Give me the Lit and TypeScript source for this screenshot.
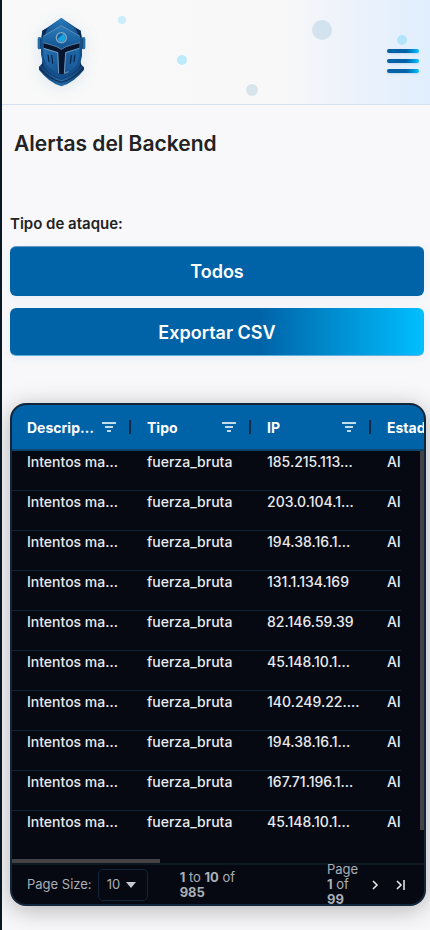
import { LitElement, html, css, svg } from "lit";
import { customElement, property, state } from "lit/decorators.js";

interface Alerta {
  descripcion: string;
  tipo: string;
  ip: string;
  estado: string;
}

const IPS = [
  "185.215.113…",
  "203.0.104.1…",
  "194.38.16.1…",
  "131.1.134.169",
  "82.146.59.39",
  "45.148.10.1…",
  "140.249.22.…",
  "194.38.16.1…",
  "167.71.196.1…",
  "45.148.10.1…",
];

const helmet = svg`
  <defs>
    <linearGradient id="dome" x1="0" y1="0" x2="0" y2="1">
      <stop offset="0" stop-color="#2a7dbd" />
      <stop offset="1" stop-color="#12528f" />
    </linearGradient>
    <linearGradient id="plate" x1="0" y1="0" x2="1" y2="1">
      <stop offset="0" stop-color="#2874b5" />
      <stop offset="1" stop-color="#15528f" />
    </linearGradient>
    <linearGradient id="plateR" x1="1" y1="0" x2="0" y2="1">
      <stop offset="0" stop-color="#1d68aa" />
      <stop offset="1" stop-color="#185593" />
    </linearGradient>
    <linearGradient id="collar" x1="0" y1="0" x2="1" y2="0">
      <stop offset="0" stop-color="#0f3a6c" />
      <stop offset="0.5" stop-color="#2469a6" />
      <stop offset="1" stop-color="#0f3a6c" />
    </linearGradient>
  </defs>
  <path d="M117 202 L129 190 L238 190 L252 204 L252 211 Q224 248 184 261 Q145 248 117 211Z" fill="url(#collar)" />
  <path d="M120 207 Q147 239 184 249 Q222 239 249 207" fill="none" stroke="#0a2348" stroke-width="3" />
  <path d="M125 198 Q150 231 184 241 Q219 231 244 198 L240 180 H128Z" fill="#0b2a54" />
  <path d="M127 94 L140 86 L184 56 L229 86 L242 94 L246 120 L246 170 L238 204 Q214 230 184 240 Q154 230 131 204 L123 165 L123 120Z" fill="#154f8b" />
  <path d="M127 94 L142 86 L132 112 L125 116Z M242 94 L227 86 L238 112 L245 116Z" fill="#0a2a52" />
  <path d="M184 56 L219 83 L237 111 L184 79 L132 111 L149 83Z" fill="url(#dome)" />
  <path d="M184 80 L240 112 L241 129 L217 135 Q194 141 184 149 Q174 141 151 135 L127 129 L128 112Z" fill="url(#dome)" />
  <path d="M129 111 L184 79 L240 111" fill="none" stroke="#86a6c0" stroke-width="2" />
  <path d="M131 131 L151 137 Q172 142 184 151 Q196 142 217 137 L238 131 L237 146 L196 158 L192 224 L178 224 L175 158 L132 146Z" fill="#07152f" />
  <path d="M129 130 L151 136 Q172 141 184 150 Q196 141 217 136 L240 130" fill="none" stroke="#7e99b0" stroke-width="2" />
  <path d="M130 146 L173 159 L177 222 Q153 212 140 196 L131 172Z" fill="url(#plate)" />
  <path d="M131 147 L173 160 L176 222" fill="none" stroke="#9fb5c7" stroke-width="2" />
  <path d="M239 146 L197 159 L192 222 Q217 212 230 196 L238 172Z" fill="url(#plateR)" />
  <path d="M238 147 L197 160 L193 222 L206 217" fill="none" stroke="#9fb5c7" stroke-width="2" />
  <path d="M144 167 L147 187 M155 168 L158 192 M225 167 L222 187 M214 168 L211 192" stroke="#06193a" stroke-width="3" stroke-linecap="round" />
  <rect x="113" y="113" width="11" height="37" rx="5" fill="#236da9" />
  <rect x="245" y="113" width="11" height="37" rx="5" fill="#236da9" />
  <path d="M122 117 V147 M247 117 V147" stroke="#0a2a52" stroke-width="2" />
  <circle cx="184" cy="115" r="15" fill="#0b5fa8" stroke="#8fa9c0" stroke-width="4" />
  <path d="M173 119 L190 103 Q197 108 196 116 Q194 127 184 127 Q176 127 173 119Z" fill="#1fb4ec" opacity="0.8" />
`;

@customElement("site-header")
export class SiteHeader extends LitElement {
  static styles = css`
    :host {
      display: block;
    }
    .bar {
      position: relative;
      display: flex;
      align-items: center;
      justify-content: space-between;
      height: 104px;
      padding: 0 11px 0 33px;
      border-bottom: 1px solid #d5e1f1;
      background: linear-gradient(90deg, #f9f9f9 0%, #f8f8f8 65%, #ecf2fb 83%, #e0eefd 100%);
    }
    .logo {
      display: block;
      filter: drop-shadow(0 2px 8px rgba(0, 98, 167, 0.12));
    }
    .dot {
      position: absolute;
      border-radius: 50%;
    }
    .d1 { left: 116px; top: 16px; width: 8px; height: 8px; background: #caeefa; }
    .d2 { left: 175px; top: 55px; width: 10px; height: 10px; background: #bdebfa; }
    .d3 { right: 98px; top: 20px; width: 20px; height: 20px; background: #d2e2ee; }
    .d4 { right: 172px; top: 84px; width: 12px; height: 12px; background: #d8e4eb; }
    .d5 { right: 23px; top: 35px; width: 10px; height: 10px; background: #b2e5fc; }
    .menu {
      position: relative;
      display: flex;
      flex-direction: column;
      gap: 6px;
      margin-top: 18px;
      padding: 0;
      border: 0;
      background: none;
    }
    .line {
      width: 32px;
      height: 4px;
      border-radius: 2px;
      background: linear-gradient(90deg, #0062a7 60%, #00bfff);
      box-shadow: 0 1px 2px rgba(0, 98, 167, 0.15);
    }
  `;

  render() {
    return html`
      <header class="bar">
        <span class="dot d1"></span><span class="dot d2"></span>
        <span class="dot d3"></span><span class="dot d4"></span>
        <span class="dot d5"></span>
        <svg class="logo" width="53" height="70" viewBox="105 53 159 210" role="img" aria-label="Logo">
          ${helmet}
        </svg>
        <button class="menu" aria-label="Menú">
          <span class="line"></span><span class="line"></span><span class="line"></span>
        </button>
      </header>
    `;
  }
}

@customElement("alert-grid")
export class AlertGrid extends LitElement {
  @property({ type: Array }) rows: Alerta[] = [];

  static styles = css`
    :host {
      display: block;
      overflow: hidden;
      border: 2px solid #13273c;
      border-radius: 16px;
      background: #060911;
      color: #e9ebef;
      font-size: 14px;
      box-shadow: 0 4px 24px rgba(0, 0, 0, 0.28);
    }
    .viewport {
      position: relative;
    }
    table,
    thead,
    tbody {
      display: block;
    }
    thead {
      overflow: hidden;
      border-bottom: 2px solid #0b4673;
      background: #0062a7;
    }
    tbody {
      overflow: hidden;
      margin-right: 23px;
      padding-bottom: 8px;
      font-weight: 500;
    }
    tr {
      display: grid;
      grid-template-columns: repeat(4, 120px);
    }
    th {
      display: flex;
      align-items: center;
      height: 44px;
      padding: 0 1px 0 15px;
      color: #fff;
      font-weight: 700;
      text-align: left;
    }
    .name {
      flex: 1;
      min-width: 0;
      overflow: hidden;
      text-overflow: ellipsis;
      white-space: nowrap;
    }
    .filter {
      display: flex;
      margin: 0 13px 0 5px;
      padding: 0;
      border: 0;
      background: none;
    }
    .divider {
      width: 2px;
      height: 14px;
      background: #0b2c49;
    }
    td {
      height: 39px;
      padding: 0 0 0 15px;
      border-bottom: 1px solid #132234;
      line-height: 22px;
      white-space: nowrap;
    }
    tr:last-child td {
      border-color: transparent;
    }
    .vbar {
      position: absolute;
      top: 46px;
      right: 0;
      width: 4px;
      height: 379px;
      background: #434345;
    }
    .hbar {
      width: 36%;
      height: 4px;
      background: #434345;
    }
    .pager {
      display: flex;
      align-items: center;
      height: 39px;
      padding: 0 15px;
      border-top: 2px solid #0d1821;
      color: #abb0b8;
      font-size: 13px;
      line-height: 15px;
    }
    .size {
      width: 50px;
      height: 32px;
      margin-left: 6px;
      padding: 0 8px;
      border: 1px solid #13273c;
      border-radius: 5px;
      appearance: none;
      background: none;
      color: inherit;
      font: inherit;
    }
    .pick {
      position: relative;
      display: flex;
    }
    .caret {
      position: absolute;
      top: 13px;
      right: 12px;
      border: 5px solid transparent;
      border-top: 6px solid #c4c8ce;
      border-bottom: 0;
      pointer-events: none;
    }
    .summary {
      width: 60px;
      margin-left: 32px;
    }
    .page {
      width: 34px;
      margin-left: auto;
    }
    .nav {
      display: flex;
      margin-left: 6px;
      padding: 0;
      border: 0;
      background: none;
    }
    .nav + .nav {
      margin-left: 10px;
    }
  `;

  private head(name: string) {
    return html`<th scope="col">
      <span class="name">${name}</span>
      <button class="filter" aria-label="Filtrar ${name}">
        <svg width="14" height="10" viewBox="0 0 14 10" fill="none" stroke="#c5dcec" stroke-width="2">
          <path d="M0 1H14M3 5H11M5 9H9" />
        </svg>
      </button>
      <span class="divider"></span>
    </th>`;
  }

  render() {
    return html`
      <div class="viewport">
        <table>
          <thead>
            <tr>${["Descripción", "Tipo", "IP", "Estado"].map((n) => this.head(n))}</tr>
          </thead>
          <tbody>
            ${this.rows.map(
              (r) => html`<tr>
                <td>${r.descripcion}</td>
                <td>${r.tipo}</td>
                <td>${r.ip}</td>
                <td>${r.estado}</td>
              </tr>`
            )}
          </tbody>
        </table>
        <div class="vbar"></div>
        <div class="hbar"></div>
      </div>
      <div class="pager">
        <label for="size">Page Size:</label>
        <span class="pick">
          <select class="size" id="size">
            <option>10</option>
            <option>20</option>
            <option>50</option>
          </select>
          <span class="caret"></span>
        </span>
        <span class="summary"><b>1</b> to <b>10</b> of <b>985</b></span>
        <span class="page">Page <b>1</b> of <b>99</b></span>
        <button class="nav" aria-label="Next page">
          <svg width="16" height="16" viewBox="0 0 16 16" fill="none" stroke="#eceef1" stroke-width="1.5">
            <path d="M6 4L10 8L6 12" />
          </svg>
        </button>
        <button class="nav" aria-label="Last page">
          <svg width="16" height="16" viewBox="0 0 16 16" fill="none" stroke="#eceef1" stroke-width="1.5">
            <path d="M4 4L8 8L4 12M11 3V13" />
          </svg>
        </button>
      </div>
    `;
  }
}

@customElement("app-root")
export class AppRoot extends LitElement {
  @state() private alertas: Alerta[] = IPS.map((ip) => ({
    descripcion: "Intentos ma…",
    tipo: "fuerza_bruta",
    ip,
    estado: "Alerta",
  }));

  static styles = css`
    :host {
      display: block;
      box-sizing: border-box;
      min-height: 100vh;
      border-left: 2px solid #0a1724;
      background: #f8f8fb;
      color: #222;
      font-family: Inter, "Liberation Sans", sans-serif;
    }
    h1 {
      margin: 0;
      padding: 25px 12px 0;
      font-size: 21px;
      font-weight: 600;
      line-height: 28px;
    }
    .controls {
      display: flex;
      flex-direction: column;
      padding: 56px 6px 47px 8px;
    }
    label {
      margin-bottom: 12px;
      font-size: 15px;
      font-weight: 600;
      line-height: 20px;
    }
    .type,
    .export {
      width: 100%;
      border: 0;
      border-radius: 6px;
      color: #fff;
      font: 600 18px Inter, "Liberation Sans", sans-serif;
      text-align: center;
      box-shadow: 0 2px 8px rgba(0, 98, 167, 0.08);
    }
    .type {
      height: 50px;
      margin-bottom: 12px;
      border-top: 1px solid #5d9bc7;
      appearance: none;
      background: #0062a7;
      text-align-last: center;
    }
    .export {
      height: 48px;
      padding: 2px 0 0;
      border-bottom: 1px solid #5fb0dc;
      background: linear-gradient(90deg, #0062a7 60%, #00bfff);
    }
    alert-grid {
      margin: 0 4px 24px 8px;
    }
  `;

  render() {
    return html`
      <site-header></site-header>
      <main>
        <h1>Alertas del Backend</h1>
        <div class="controls">
          <label for="tipo">Tipo de ataque:</label>
          <select class="type" id="tipo">
            <option>Todos</option>
            <option>fuerza_bruta</option>
          </select>
          <button class="export">Exportar CSV</button>
        </div>
        <alert-grid .rows=${this.alertas}></alert-grid>
      </main>
    `;
  }
}
